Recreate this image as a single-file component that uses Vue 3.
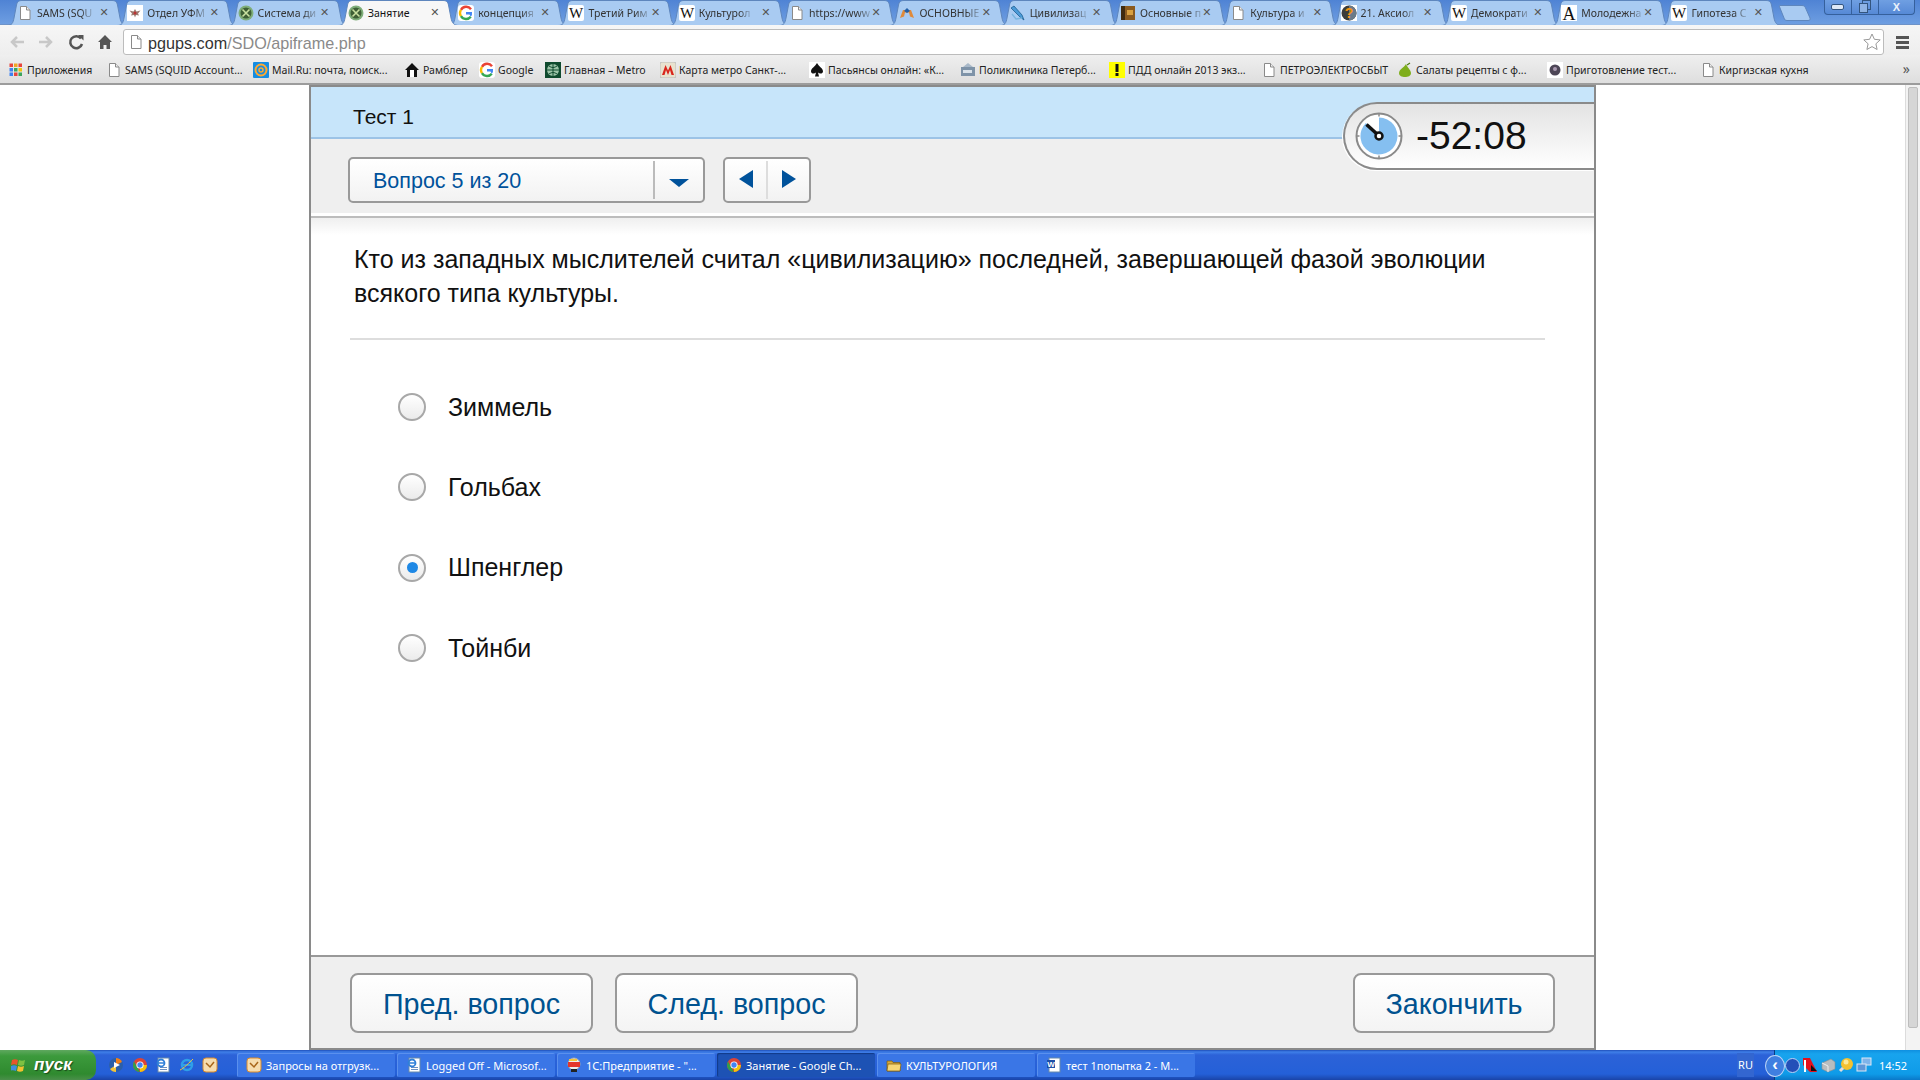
<script setup>
import { h } from 'vue'

const shapes = {
  page: [['path', { d: 'M3.5 1.5h6l3.5 3.5v9.500h-9.500z', fill: '#fff', stroke: '#8a8a8a' }], ['path', { d: 'M9.500 1.500v3.500h3.500', fill: '#eee', stroke: '#8a8a8a' }]],
  mvd: [['rect', { width: 16, height: 16, fill: '#fff' }], ['path', { d: 'M8 4l1.500 2.500 4-1-2.500 3 1 2-3-.5-1 2.500-1-2.500-3 .5 1-2-2.500-3 4 1z', fill: '#9b7a70' }], ['circle', { cx: 8, cy: 8, r: 1.500, fill: '#b33' }]],
  sdo: [['circle', { cx: 8, cy: 8, r: 7.500, fill: '#7fae7a' }], ['circle', { cx: 8, cy: 8, r: 5.500, fill: '#3e5f35' }], ['path', { d: 'M4.500 4.500l7 7M11.500 4.500l-7 7', stroke: '#c9e0a0', 'stroke-width': 1.600 }]],
  g: [['rect', { width: 16, height: 16, rx: 3, fill: '#fff' }], ['path', { d: 'M13 4.200A6 6 0 0 0 3 4.800', stroke: '#ea4335', 'stroke-width': 2.400, fill: 'none' }], ['path', { d: 'M3 4.800a6 6 0 0 0 0 6.400', stroke: '#fbbc05', 'stroke-width': 2.400, fill: 'none' }], ['path', { d: 'M3 11.200a6 6 0 0 0 9.800 .6', stroke: '#34a853', 'stroke-width': 2.400, fill: 'none' }], ['path', { d: 'M12.800 11.800A6 6 0 0 0 14 7H8v2.400h3.500', stroke: 'none', fill: '#4285f4' }]],
  w: [['rect', { width: 16, height: 16, rx: 2, fill: '#fff' }], ['text', { x: 8, y: 13, 'text-anchor': 'middle', 'font-size': 15, 'font-family': 'Liberation Serif, serif', fill: '#111' }, 'W']],
  arch: [['path', { d: 'M1 13L4 5h8l3 8-4-1.500-1-4H6l-1 4z', fill: '#e08a3a' }], ['path', { d: 'M5 6l3-3 3 3-3 2z', fill: '#2360a8' }]],
  pen: [['path', { d: 'M1 3l9 9 4 3-2-5-8-9z', fill: '#4a9ad8', stroke: '#1f5f92', 'stroke-width': .8 }], ['path', { d: 'M2 9l4 5 6-1', stroke: '#7ab6e0', 'stroke-width': 1.400, fill: 'none' }]],
  book: [['rect', { x: 1, y: 1, width: 14, height: 14, fill: '#8a5a20' }], ['rect', { x: 1, y: 1, width: 4, height: 14, fill: '#3f2a10' }], ['rect', { x: 7, y: 5, width: 6, height: 5, fill: '#d9a040' }]],
  q: [['rect', { width: 16, height: 16, fill: '#fff' }], ['circle', { cx: 8, cy: 8, r: 7.500, fill: '#3c3c3c' }], ['path', { d: 'M8 .5a7.500 7.500 0 0 1 0 15z', fill: '#6a7a88' }], ['text', { x: 8, y: 13, 'text-anchor': 'middle', 'font-size': 14, 'font-weight': 700, 'font-family': 'Liberation Sans, sans-serif', fill: '#f0930e' }, '?']],
  a: [['rect', { width: 16, height: 16, fill: '#fff' }], ['text', { x: 8, y: 15, 'text-anchor': 'middle', 'font-size': 18, 'font-family': 'Liberation Serif, serif', fill: '#111' }, 'A']],
  apps: [0, 1, 2].flatMap(r => [0, 1, 2].map(c => ['rect', { x: 1.500 + c * 4.500, y: 1.500 + r * 4.500, width: 3.500, height: 3.500, fill: [['#e8453c', '#f4a622', '#e8453c'], ['#3e82f1', '#3ba55c', '#f4c20d'], ['#3e82f1', '#e8453c', '#3ba55c']][r][c] }])),
  mail: [['rect', { width: 16, height: 16, rx: 1, fill: '#168de2' }], ['circle', { cx: 8, cy: 8, r: 5.500, fill: 'none', stroke: '#ffa930', 'stroke-width': 2 }], ['circle', { cx: 8, cy: 8, r: 2, fill: 'none', stroke: '#ffa930', 'stroke-width': 1.500 }]],
  home: [['path', { d: 'M8 1L1 8h2v7h10V8h2z', fill: '#111' }], ['rect', { x: 6, y: 8, width: 4, height: 7, fill: '#fff' }]],
  globe: [['rect', { width: 16, height: 16, fill: '#0f4a2e' }], ['circle', { cx: 8, cy: 8, r: 6, fill: '#9cc4a8' }], ['path', { d: 'M2 8h12M8 2v12M4 4c3 2 5 2 8 0M4 12c3-2 5-2 8 0', stroke: '#0f4a2e', fill: 'none' }]],
  metro: [['rect', { width: 16, height: 16, rx: 2, fill: '#e8e2cf', stroke: '#bbb' }], ['path', { d: 'M2 13L5.500 3 8 8.500 10.500 3 14 13h-2.500L10 8l-2 5-2-5-1.500 5z', fill: '#d9261c' }]],
  spade: [['rect', { width: 16, height: 16, fill: '#fff' }], ['path', { d: 'M8 1c2 4 6 5 6 8.500 0 2-3 3-5 1l1 4H6l1-4c-2 2-5 1-5-1C2 6 6 5 8 1z', fill: '#111' }]],
  clinic: [['rect', { x: 1, y: 5, width: 14, height: 9, fill: '#7e93a8' }], ['path', { d: 'M3 5l5-4 5 4z', fill: '#a8b8c8' }], ['rect', { x: 3, y: 8, width: 9, height: 3, fill: '#d9e2ea' }]],
  warn: [['rect', { width: 16, height: 16, fill: '#ff0' }], ['rect', { x: 6.500, y: 2, width: 3, height: 8, fill: '#111' }], ['rect', { x: 6.500, y: 11, width: 3, height: 3, fill: '#111' }]],
  pear: [['path', { d: 'M9 2c1 3 5 6 5 9s-3 4-6 4-6-1-6-4c0-4 5-5 7-9z', fill: '#7fae1c' }], ['path', { d: 'M10 3l3-2', stroke: '#4c7a10', 'stroke-width': 1.200 }]],
  cook: [['rect', { width: 16, height: 16, fill: '#fff' }], ['circle', { cx: 8, cy: 8, r: 5.500, fill: '#4d4656' }], ['circle', { cx: 8, cy: 7, r: 2, fill: '#a99ab0' }]],
  ie: [['circle', { cx: 8, cy: 8, r: 5, fill: 'none', stroke: '#2f9fe8', 'stroke-width': 2.500 }], ['path', { d: 'M3 8h10', stroke: '#2f9fe8', 'stroke-width': 2 }], ['path', { d: 'M1 13c3-1 10-8 13-11', stroke: '#f2c43c', 'stroke-width': 1, fill: 'none' }]],
  doc: [['rect', { x: 3, y: 1, width: 11, height: 14, fill: '#fff', stroke: '#6688aa' }], ['path', { d: 'M5 10.500h7M5 12.500h7', stroke: '#6b8fc0' }], ['circle', { cx: 6, cy: 6, r: 3.500, fill: 'none', stroke: '#2f7fd8', 'stroke-width': 1.800 }], ['path', { d: 'M2 6h8', stroke: '#2f7fd8', 'stroke-width': 1.500 }]],
  word: [['rect', { x: 3, y: 1, width: 11, height: 14, fill: '#fff', stroke: '#6688aa' }], ['rect', { x: 1, y: 3, width: 8, height: 8, fill: '#1d4fa8' }], ['text', { x: 5, y: 10, 'text-anchor': 'middle', 'font-size': 8, 'font-weight': 700, 'font-family': 'Liberation Sans, sans-serif', fill: '#fff' }, 'W']],
  mailer: [['rect', { x: 1, y: 1, width: 14, height: 14, rx: 3, fill: '#f6dcae', stroke: '#d98a2c' }], ['path', { d: 'M4 6l4 4 4-5', stroke: '#a8651a', 'stroke-width': 1.500, fill: 'none' }]],
  onec: [['circle', { cx: 8, cy: 7, r: 6, fill: '#eee', stroke: '#aaa' }], ['rect', { x: 2, y: 5, width: 12, height: 5, fill: '#e4352b' }], ['rect', { x: 5, y: 12, width: 6, height: 3, fill: '#222' }], ['path', { d: 'M3 3h8', stroke: '#f2c43c', 'stroke-width': 2 }]],
  chrome: [['circle', { cx: 8, cy: 8, r: 7, fill: '#dc4437' }], ['path', { d: 'M2 4.500L8 15a7 7 0 0 1-6-10.500z', fill: '#2fa04b' }], ['path', { d: 'M8 8h7a7 7 0 0 1-7 7z', fill: '#f4c20d' }], ['circle', { cx: 8, cy: 8, r: 3.600, fill: '#fff' }], ['circle', { cx: 8, cy: 8, r: 2.700, fill: '#4285f4' }]],
  folder: [['path', { d: 'M1 4h5l1 1.500h7V14H1z', fill: '#d8a93a', stroke: '#7a5a12', 'stroke-width': .7 }], ['path', { d: 'M2 7h13l-1 7H1z', fill: '#f6d676', stroke: '#7a5a12', 'stroke-width': .7 }]],
  media: [['circle', { cx: 8, cy: 8, r: 7, fill: '#2b5fa8' }], ['path', { d: 'M8 1a7 7 0 0 1 6 4L8 8z', fill: '#ef7f1a' }], ['path', { d: 'M8 15a7 7 0 0 1-6-3l6-4z', fill: '#f2c43c' }], ['path', { d: 'M6 5l6 3-6 3z', fill: '#fff' }]],
  shield: [['path', { d: 'M1 1h7l7 14H8L1 8z', fill: '#e3101c' }], ['path', { d: 'M3 3v12', stroke: '#fff', 'stroke-width': 2 }], ['path', { d: 'M9 8l6 6h-6z', fill: '#111' }]],
  printer: [['path', { d: 'M2 6l9-4 4 3v7l-7 3-6-3z', fill: '#b9bdbf', stroke: '#8b8f92', 'stroke-width': .6 }], ['path', { d: 'M2 6l6 3v6', fill: 'none', stroke: '#eee' }]],
  bulb: [['circle', { cx: 9, cy: 7, r: 6, fill: '#f3c130' }], ['circle', { cx: 8, cy: 5, r: 2.500, fill: '#fbe99a' }], ['path', { d: 'M5 11l-3 3', stroke: '#ddd', 'stroke-width': 3 }]],
  net: [['rect', { x: 6, y: 1, width: 9, height: 7, fill: '#7fb4ea', stroke: '#dce8f5' }], ['rect', { x: 1, y: 7, width: 9, height: 7, fill: '#5f97d8', stroke: '#dce8f5' }]],
  win: [['path', { d: 'M1 3c2-1 4-1 6 0l-1 5c-2-1-4-1-6 0z', fill: '#e8542c' }], ['path', { d: 'M8 3c2 1 4 1 6 0l-1 5c-2 1-4 1-6 0z', fill: '#7fc142' }], ['path', { d: 'M0 9c2-1 4-1 6 0l-1 5c-2-1-4-1-6 0z', fill: '#3f8de0' }], ['path', { d: 'M7 9c2 1 4 1 6 0l-1 5c-2 1-4 1-6 0z', fill: '#f3c130' }]]
}

const Icon = ({ n }) =>
  h('svg', { width: 16, height: 16, viewBox: '0 0 16 16', style: 'flex:none;display:block' },
    shapes[n].map(([t, a, c]) => h(t, a, c)))
Icon.props = ['n']

const tabs = [
  ['page', 'SAMS (SQU'], ['mvd', 'Отдел УФМ'], ['sdo', 'Система ди'], ['sdo', 'Занятие'],
  ['g', 'концепция'], ['w', 'Третий Рим'], ['w', 'Культурол'], ['page', 'https://www'],
  ['arch', 'ОСНОВНЫЕ'], ['pen', 'Цивилизац'], ['book', 'Основные п'], ['page', 'Культура и'],
  ['q', '21. Аксиол'], ['w', 'Демократи'], ['a', 'Молодежна'], ['w', 'Гипотеза С']
]

const bookmarks = [
  ['apps', 'Приложения', 98], ['page', 'SAMS (SQUID Account...', 147], ['mail', 'Mail.Ru: почта, поиск...', 151],
  ['home', 'Рамблер', 75], ['g', 'Google', 66], ['globe', 'Главная – Metro', 115],
  ['metro', 'Карта метро Санкт-...', 149], ['spade', 'Пасьянсы онлайн: «К...', 151], ['clinic', 'Поликлиника Петерб...', 149],
  ['warn', 'ПДД онлайн 2013 экз...', 152], ['page', 'ПЕТРОЭЛЕКТРОСБЫТ', 136], ['pear', 'Салаты рецепты с ф...', 150],
  ['cook', 'Приготовление тест...', 153], ['page', 'Киргизская кухня', 150]
]

const options = [
  { label: 'Зиммель' }, { label: 'Гольбах' }, { label: 'Шпенглер', checked: true }, { label: 'Тойнби' }
]

const quick = ['media', 'chrome', 'doc', 'ie', 'mailer']
const tasks = [
  ['mailer', 'Запросы на отгрузк...'], ['doc', 'Logged Off - Microsof...'], ['onec', '1С:Предприятие - "...'],
  ['chrome', 'Занятие - Google Ch...', true], ['folder', 'КУЛЬТУРОЛОГИЯ'], ['word', 'тест 1попытка 2 - М...']
]
const tray = ['shield', 'printer', 'bulb', 'net']
</script>

<template>
  <div class="screen">
    <div class="tabstrip">
      <div class="tabs">
        <div v-for="(t, i) in tabs" :key="i" class="tab" :class="{ active: i === 3 }">
          <svg class="shape" width="121" height="25" viewBox="0 0 121 25">
            <path d="M0 25.500C5 25.500 6 23 7 18L9.500 5C10.300 1.500 12 .5 15 .5H105C108 .5 109.700 1.500 110.500 5L113 18C114 23 116 25.500 121 25.500" />
          </svg>
          <Icon :n="t[0]" />
          <span class="tabtext">{{ t[1] }}</span>
          <span class="tabx">✕</span>
        </div>
        <svg class="newtab" width="33" height="16" viewBox="0 0 33 16">
          <path d="M1 .5H23C25 .5 26 1.500 27 4L31 13C31.500 14.500 31 15.500 29 15.500H8C6 15.500 5.500 14.500 5 13L1 3C.5 1.500 0 .5 1 .5Z" fill="#a9cbf2" stroke="#5e86bd" />
        </svg>
      </div>
      <div class="winctl">
        <span class="wbtn"><svg width="14" height="8" viewBox="0 0 14 8"><rect x=".5" y="1.500" width="12" height="5" rx="1.500" fill="#dde8f6" stroke="#33557f" /></svg></span>
        <span class="wbtn"><svg width="14" height="14" viewBox="0 0 14 14"><rect x="4.500" y=".5" width="8" height="9" fill="none" stroke="#33557f" /><rect x="1.500" y="3.500" width="8" height="9" fill="#8fb3e4" stroke="#33557f" /></svg></span>
        <span class="wbtn wclose">X</span>
      </div>
    </div>

    <div class="toolbar">
      <svg class="navicons" width="105" height="18" viewBox="0 0 105 18">
        <path d="M15 9H3M8 4L3 9l5 5" fill="none" stroke="#c8c8c8" stroke-width="2.500" />
        <path d="M30 9H42M37 4l5 5-5 5" fill="none" stroke="#c8c8c8" stroke-width="2.500" />
        <path d="M72 5.500A6 6 0 1 0 73 11" fill="none" stroke="#555" stroke-width="2.500" />
        <path d="M69 2l5.500 0v5.500z" fill="#555" />
        <path d="M96 2L89 9h2v7h3.500v-4h3v4H101V9h2z" fill="#555" />
      </svg>
      <div class="omnibox">
        <Icon n="page" />
        <span class="url"><b>pgups.com</b>/SDO/apiframe.php</span>
        <svg class="star" width="18" height="18" viewBox="0 0 18 18"><path d="M9 1l2.400 5.300 5.800.6-4.300 3.900 1.200 5.700L9 13.600 3.900 16.500l1.200-5.700L.8 6.900l5.800-.6z" fill="#fff" stroke="#999" /></svg>
      </div>
      <div class="hamburger"><i></i><i></i><i></i></div>
    </div>

    <div class="bookmarks">
      <div v-for="(b, i) in bookmarks" :key="i" class="bm" :style="{ width: b[2] + 'px' }">
        <Icon :n="b[0]" />
        <span>{{ b[1] }}</span>
      </div>
      <span class="more">»</span>
    </div>

    <div class="main">
      <section class="panel">
        <header class="head"><span>Тест 1</span></header>
        <div class="controls">
          <div class="select">
            <span class="seltext">Вопрос 5 из 20</span>
            <span class="selcaret"><i class="caret"></i></span>
          </div>
          <div class="pager">
            <span class="pg"><i class="arr left"></i></span>
            <span class="pg"><i class="arr right"></i></span>
          </div>
        </div>
        <div class="sep"></div>

        <div class="timer">
          <svg width="48" height="48" viewBox="0 0 48 48">
            <circle cx="24" cy="24" r="22.500" fill="#fff" stroke="#8a8a8a" stroke-width="2" />
            <path d="M24 24V5.500A18.500 18.500 0 1 1 10.900 10.900Z" fill="#85bff0" />
            <path d="M24 1.500v3M24 43.500v3M1.500 24h3M43.500 24h3" stroke="#8a8a8a" stroke-width="1.500" />
            <path d="M22 22L11.500 12.500" stroke="#111" stroke-width="3.500" />
            <circle cx="24" cy="24" r="3.500" fill="#fff" stroke="#111" stroke-width="2.500" />
          </svg>
          <span class="time">-52:08</span>
        </div>

        <div class="body">
          <p class="question">Кто из западных мыслителей считал «цивилизацию» последней, завершающей фазой эволюции всякого типа культуры.</p>
          <div class="rule"></div>
          <div class="options">
            <label v-for="o in options" :key="o.label" class="opt">
              <span class="radio"><i v-if="o.checked"></i></span>
              <span>{{ o.label }}</span>
            </label>
          </div>
        </div>

        <footer class="foot">
          <button class="btn">Пред. вопрос</button>
          <button class="btn">След. вопрос</button>
          <button class="btn finish">Закончить</button>
        </footer>
      </section>
      <div class="scroll"><div class="thumb"></div></div>
    </div>

    <div class="taskbar">
      <div class="start"><Icon n="win" /><span>пуск</span></div>
      <div class="quick"><Icon v-for="(q, i) in quick" :key="i" :n="q" /></div>
      <div class="tasks">
        <div v-for="(t, i) in tasks" :key="i" class="task" :class="{ on: t[2] }">
          <Icon :n="t[0]" />
          <span>{{ t[1] }}</span>
        </div>
      </div>
      <span class="lang">RU</span>
      <div class="tray">
        <span class="chev">‹</span>
        <span class="winbtn"></span>
        <Icon v-for="(q, i) in tray" :key="i" :n="q" />
        <span class="clock">14:52</span>
      </div>
    </div>
  </div>
</template>

<style>
html, body { margin: 0; overflow: hidden; background: #fff; }
</style>

<style scoped>
.screen { width: 1920px; height: 1080px; display: flex; flex-direction: column; overflow: hidden; font-family: "Liberation Sans", Arial, sans-serif; background: #fff; }

.tabstrip { height: 25px; flex: none; display: flex; background: linear-gradient(#4f83d4, #6f9fe2); position: relative; box-shadow: inset 0 -1px 0 #6e93c8; }
.tabs { display: flex; padding-left: 7px; align-items: flex-end; }
.tab { position: relative; width: 120.300px; height: 25px; margin-right: -10px; display: flex; align-items: center; padding-left: 10px; box-sizing: border-box; font: 10.500px "Noto Sans", sans-serif; color: #333; }
.tab svg:not(.shape) { position: relative; }
.shape { position: absolute; left: 0; top: 0; }
.shape path { fill: #a9cbf2; stroke: #5e86bd; }
.tab.active { z-index: 2; color: #111; }
.tab.active .shape path { fill: #f7f7f7; }
.tabtext { position: relative; margin-left: 4px; flex: none; white-space: nowrap; -webkit-mask-image: linear-gradient(90deg, #000 78%, rgba(0, 0, 0, .25)); mask-image: linear-gradient(90deg, #000 78%, rgba(0, 0, 0, .25)); }
.tab.active .tabtext { -webkit-mask-image: none; mask-image: none; }
.tabx { position: absolute; left: 91px; width: 12px; text-align: center; font: 700 11px "DejaVu Sans", sans-serif; color: #555; }
.newtab { margin: 0 0 4px 7px; flex: none; }
.winctl { position: absolute; left: 1824px; top: 0; width: 91px; height: 15px; display: flex; border: 1px solid #35609c; border-top: 0; border-radius: 0 0 4px 4px; box-sizing: border-box; background: linear-gradient(#6f9fe2, #5689d6); }
.wbtn { width: 26px; display: flex; align-items: center; justify-content: center; border-right: 1px solid #35609c; }
.wclose { flex: 1; border-right: 0; color: #eaf2fb; font: 700 11px "Liberation Sans", sans-serif; }

.toolbar { height: 30px; flex: none; box-sizing: border-box; display: flex; align-items: center; background: linear-gradient(#f6f6f6, #eeeeee); padding: 4px 0 0 9px; }
.navicons { flex: none; }
.omnibox { margin-left: 9px; width: 1761px; height: 26px; box-sizing: border-box; display: flex; align-items: center; background: #fff; border: 1px solid #bcbcbc; border-radius: 3px; padding-left: 4px; }
.url { margin-left: 4px; padding-top: 2px; font: 16.200px "Liberation Sans", sans-serif; color: #8a8a8a; }
.url b { font-weight: 400; color: #333; }
.star { margin-left: auto; margin-right: 2px; }
.hamburger { margin-left: 12px; display: flex; flex-direction: column; gap: 2px; }
.hamburger i { display: block; width: 13px; height: 3px; background: #555; }

.bookmarks { height: 30px; flex: none; box-sizing: border-box; display: flex; align-items: center; padding: 1px 0 0 8px; background: linear-gradient(#efefef, #dedede); border-bottom: 2px solid #9c9c9c; position: relative; font: 10.500px "Noto Sans", sans-serif; color: #222; }
.bm { display: flex; align-items: center; gap: 3px; flex: none; white-space: nowrap; }
.more { position: absolute; right: 10px; top: 4px; font-size: 14px; color: #555; }

.main { flex: 1; min-height: 0; display: flex; }
.panel { position: relative; margin-left: 309px; width: 1287px; box-sizing: border-box; display: flex; flex-direction: column; border: 2px solid #8a8a8a; background: #fff; }
.head { height: 52px; flex: none; box-sizing: border-box; display: flex; align-items: center; padding: 10px 0 0 42px; background: #c7e5fa; border-bottom: 2px solid #9cc3e6; font-size: 21px; color: #111; }
.controls { height: 74px; flex: none; box-sizing: border-box; display: flex; gap: 18px; padding: 18px 0 0 37px; background: #efefef; }
.select, .pager { height: 46px; box-sizing: border-box; display: flex; border: 2px solid #999; border-radius: 5px; background: linear-gradient(#fff, #f2f2f2); }
.select { width: 357px; }
.seltext { flex: 1; padding-left: 23px; line-height: 44px; font-size: 21.500px; color: #00529b; }
.selcaret { width: 50px; margin: 2px 0; border-left: 2px solid #bbb; display: flex; align-items: center; justify-content: center; box-sizing: border-box; }
.caret { display: block; margin-top: 5px; border: 10px solid transparent; border-top: 8px solid #00529b; border-bottom: 0; }
.pager { width: 88px; }
.pg { flex: 1; display: flex; align-items: center; justify-content: center; margin: 2px 0; }
.pg + .pg { border-left: 2px solid #ddd; }
.arr { display: block; border: 9px solid transparent; border-left: 0; border-right: 14px solid #00529b; margin-bottom: 2px; }
.arr.right { border-right: 0; border-left: 14px solid #00529b; }
.sep { height: 2px; flex: none; border-top: 3px solid #fff; background: #bcbcbc; }

.timer { position: absolute; top: 15px; left: 1032px; right: 0; height: 68px; box-sizing: border-box; display: flex; align-items: center; gap: 13px; padding-left: 10px; border: 2px solid #8a8a8a; border-right: 0; border-radius: 34px 0 0 34px; background: linear-gradient(#e3e3e3, #fff); box-shadow: -1px 1px 0 #fff; }
.time { font-size: 39px; color: #111; }

.body { flex: 1; min-height: 0; background: linear-gradient(#efefef, #fff 17px); background-repeat: no-repeat; }
.question { margin: 24px 0 0; padding: 0 100px 0 43px; font-size: 25px; line-height: 34px; color: #111; }
.rule { margin: 28px 0 0 39px; width: 1195px; height: 2px; background: #ddd; }
.options { display: flex; flex-direction: column; margin-top: 27px; }
.opt { height: 80.300px; display: flex; align-items: center; gap: 22px; padding-left: 87px; font-size: 25px; color: #111; }
.radio { width: 28px; height: 28px; box-sizing: border-box; border: 2px solid #a8a8a8; border-radius: 50%; background: linear-gradient(#fff, #ebebeb); display: flex; align-items: center; justify-content: center; }
.radio i { display: block; width: 11px; height: 11px; border-radius: 50%; background: #1e88e5; }

.foot { height: 93px; flex: none; box-sizing: border-box; display: flex; gap: 22px; padding: 16px 39px 0 39px; border-top: 2px solid #999; background: #efefef; }
.btn { width: 243px; height: 60px; box-sizing: border-box; border: 2px solid #999; border-radius: 8px; background: linear-gradient(#fff, #f4f4f4); font: 28.700px "Liberation Sans", sans-serif; color: #00528f; padding: 2px 0 0; }
.finish { margin-left: auto; width: 202px; }

.scroll { margin-left: auto; width: 15px; box-sizing: border-box; background: #f3f3f3; border-left: 1px solid #dcdcdc; padding: 2px 2px 0; display: flex; flex-direction: column; }
.thumb { height: 941px; background: #d6d6d6; border: 1px solid #bdbdbd; border-radius: 2px; box-sizing: border-box; }

.taskbar { height: 30px; flex: none; display: flex; align-items: center; position: relative; background: linear-gradient(#1f4fba 0, #3f7fe8 2px, #2c62d8 5px, #2460d8 24px, #1a44a8 100%); color: #fff; font: 11px "Noto Sans", sans-serif; }
.start { width: 96px; height: 30px; flex: none; box-sizing: border-box; display: flex; align-items: center; gap: 7px; padding-left: 11px; border-radius: 0 10px 10px 0; background: linear-gradient(#5fa85f, #3c9a3c 20%, #2f8a2f 80%, #4a8f4a); font: italic 700 17px "Liberation Sans", sans-serif; text-shadow: 1px 1px 1px #1a4a1a; }
.quick { width: 141px; flex: none; box-sizing: border-box; display: flex; gap: 7.500px; padding-left: 12px; }
.tasks { display: flex; gap: 2px; flex: none; }
.task { width: 158px; height: 24px; box-sizing: border-box; display: flex; align-items: center; gap: 4px; padding-left: 9px; border-radius: 2px; background: #3a76e6; box-shadow: inset 1px 1px 0 #5a90ee; white-space: nowrap; }
.task.on { background: #1d52b4; box-shadow: inset 1px 1px 1px #123a88; }
.lang { margin-left: auto; margin-right: 20px; padding: 0 1px; font-size: 11px; background: #3366d0; line-height: 24px; }
.tray { width: 146px; height: 30px; flex: none; box-sizing: border-box; display: flex; align-items: center; gap: 2px; padding-left: 10px; position: relative; background: linear-gradient(#0f8fe0 0, #18a4ee 4px, #0f9be8 24px, #0a78c8); border-left: 1px solid #0a3a80; }
.chev { position: absolute; left: -10px; top: 5px; width: 18px; height: 20px; border-radius: 50%; background: #3f7fe0; border: 1px solid #bcd4f6; text-align: center; font: 700 17px/17px "Liberation Sans", sans-serif; }
.winbtn { width: 15px; height: 15px; flex: none; box-sizing: border-box; border-radius: 50%; background: #2450b8; border: 1px solid #bcd4f6; }
.clock { margin-left: 5px; font-size: 11px; }
</style>
